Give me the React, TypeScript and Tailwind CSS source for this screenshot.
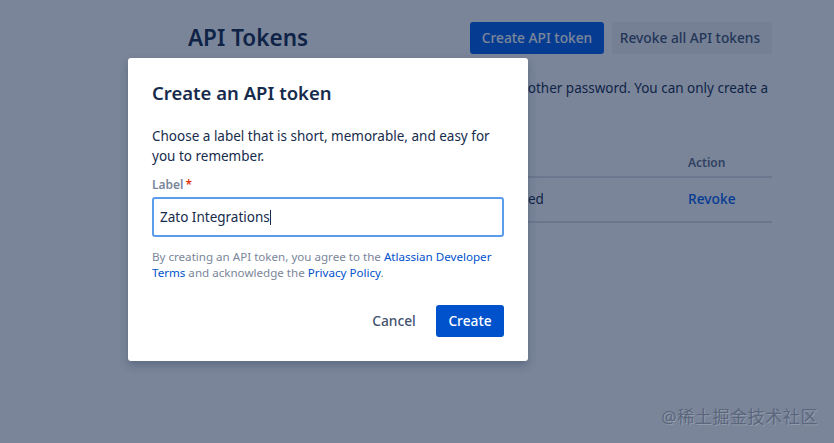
const font = { fontFamily: '"Noto Sans", "Noto Sans CJK SC", sans-serif' };

function TokenPage() {
  return (
    <div className="ml-[188px] w-[584px] pt-[22px] text-[#172b4d]">
      <div className="flex items-center justify-between">
        <h1 className="text-[22.5px] leading-8 font-semibold">API Tokens</h1>
        <div className="flex gap-2">
          <button className="h-8 w-[134px] rounded-[3px] bg-[#0060f0] text-[13.75px] font-medium text-white">
            Create API token
          </button>
          <button className="h-8 w-[160px] rounded-[3px] bg-[#f4f5f7] pr-1 text-[13.75px] font-medium text-[#42526e]">
            Revoke all API tokens
          </button>
        </div>
      </div>

      <p className="mt-6 pr-1 text-right text-[13.5px] leading-5 whitespace-nowrap">
        Use tokens like any other password. You can only create a
      </p>

      <div className="mt-[55px] grid grid-cols-[284px_216px_84px]">
        <div className="col-span-2 border-b-2 border-[#dfe1e6] pb-[3px]" />
        <div className="border-b-2 border-[#dfe1e6] pb-[3px] text-xs leading-5 font-semibold text-[#5e6c84]">
          Action
        </div>
        <div className="border-b-2 border-[#dfe1e6]" />
        <div className="border-b-2 border-[#dfe1e6] pt-2.5 pb-[11px] text-[13.5px] leading-[22px]">
          Never used
        </div>
        <div className="border-b-2 border-[#dfe1e6] pt-2.5 pb-[11px] text-[13.75px] leading-[22px] font-medium text-[#0060f0]">
          Revoke
        </div>
      </div>
    </div>
  );
}

function TokenModal() {
  return (
    <div className="absolute top-[58px] left-[128px] w-[400px] rounded-[3px] bg-white px-6 pt-[21px] pb-6 text-[#172b4d] shadow-[0_4px_8px_rgba(9,30,66,0.25)]">
      <h2 className="text-[18.5px] leading-7 font-semibold">Create an API token</h2>
      <p className="mt-[19px] text-[13.5px] leading-5">
        Choose a label that is short, memorable, and easy for you to remember.
      </p>
      <div className="mt-[11px] text-xs leading-4 font-semibold text-[#7a869a]">
        Label<span className="ml-0.5 text-[#de350b]">*</span>
      </div>
      <div className="mt-1 flex h-10 items-center rounded-[3px] border-2 border-[#5b9ded] px-1.5 text-[13.5px]">
        <span>Zato Integrations</span>
        <span className="h-[15px] w-px bg-[#172b4d]" />
      </div>
      <p className="mt-3 text-[11.6px] leading-4 text-[#7a869a]">
        By creating an API token, you agree to the{' '}
        <span className="text-[#0052cc]">Atlassian Developer</span>{' '}
        <span className="text-[#0052cc]">Terms</span> and acknowledge the{' '}
        <span className="text-[#0052cc]">Privacy Policy</span>.
      </p>
      <div className="mt-6 flex items-center justify-end gap-2">
        <button className="h-8 w-[68px] text-[13.75px] font-medium text-[#42526e]">Cancel</button>
        <button className="h-8 w-[68px] rounded-[3px] bg-[#0052cc] text-[13.75px] font-medium text-white">
          Create
        </button>
      </div>
    </div>
  );
}

export default function App() {
  return (
    <div className="relative h-[443px] w-[834px] overflow-hidden bg-white" style={font}>
      <TokenPage />
      <div className="absolute inset-0 bg-[rgba(9,30,66,0.54)]" />
      <TokenModal />
      <div className="absolute right-4 bottom-4 text-[17px] leading-5 tracking-[0.6px] text-[#5b667c] [text-shadow:1px_1px_0_rgba(255,255,255,0.2)]">
        @稀土掘金技术社区
      </div>
    </div>
  );
}
